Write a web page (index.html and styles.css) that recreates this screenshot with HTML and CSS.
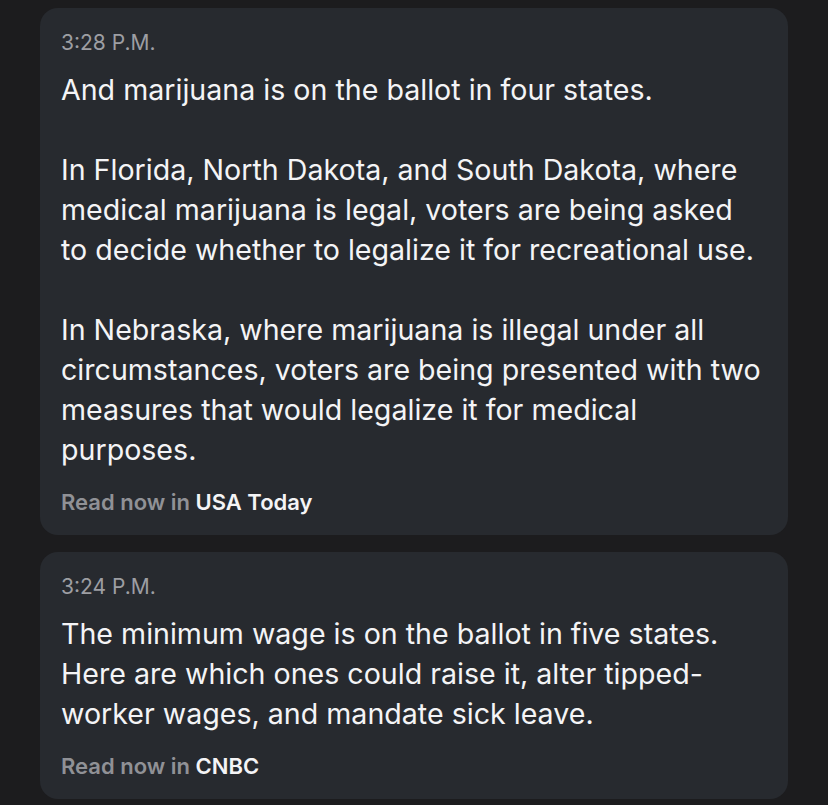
FILE: index.html
```html
<!DOCTYPE html>
<html lang="en">
<head>
<meta charset="utf-8">
<link rel="stylesheet" href="styles.css">
</head>
<body>
<div class="feed">
  <article class="card">
    <div class="time">3:28 P.M.</div>
    <div class="body">
      <p>And marijuana is on the ballot in four states.</p>
      <p>In Florida, North Dakota, and South Dakota, where medical marijuana is legal, voters are being asked to decide whether to legalize it for recreational use.</p>
      <p>In Nebraska, where marijuana is illegal under all circumstances, voters are being presented with two measures that would legalize it for medical purposes.</p>
    </div>
    <div class="source">Read now in <span class="outlet">USA Today</span></div>
  </article>
  <article class="card">
    <div class="time">3:24 P.M.</div>
    <div class="body">
      <p>The minimum wage is on the ballot in five states. Here are which ones could raise it, alter tipped-worker wages, and mandate sick leave.</p>
    </div>
    <div class="source">Read now in <span class="outlet">CNBC</span></div>
  </article>
</div>
</body>
</html>
```
FILE: styles.css
```css
html, body {
  margin: 0;
  padding: 0;
  background: #1c1c1e;
}
body {
  font-family: Inter, "Noto Sans", "Liberation Sans", sans-serif;
  color: #f2f2f4;
}
.feed {
  display: flex;
  flex-direction: column;
  gap: 17px;
  padding: 8px 40px 0 40px;
}
.card {
  background: #272a2f;
  border-radius: 18px;
  padding: 22px 25px 20px 21px;
  display: flex;
  flex-direction: column;
}
.time {
  font-size: 21px;
  line-height: 26px;
  color: #9d9ea3;
}
.body {
  margin-top: 14px;
  font-size: 28.6px;
  line-height: 40px;
  color: #f4f4f6;
}
.body p {
  margin: 0;
}
.body p + p {
  margin-top: 40px;
}
.source {
  margin-top: 19px;
  font-size: 22px;
  line-height: 26px;
  font-weight: 600;
  color: #909196;
}
.outlet {
  color: #f4f4f6;
}
```
